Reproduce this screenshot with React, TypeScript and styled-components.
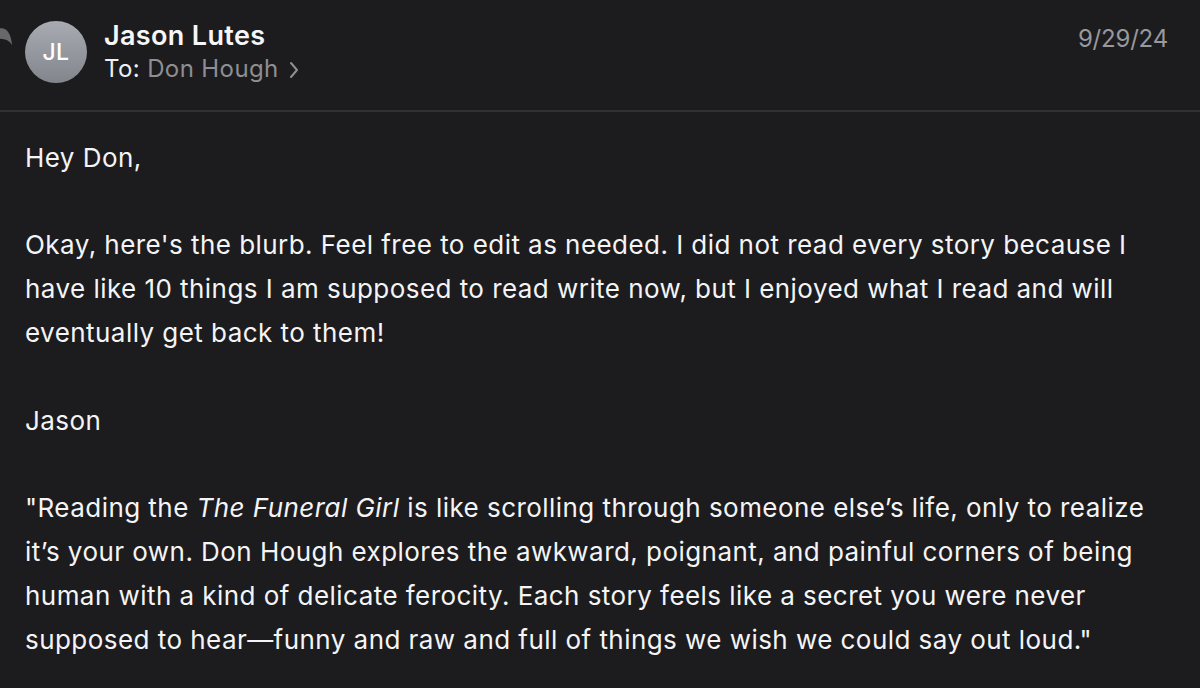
import React from "react";
import styled, { createGlobalStyle } from "styled-components";

const Global = createGlobalStyle`
  html, body { margin: 0; padding: 0; background: #1c1c1e; }
  body { font-family: Inter, "Noto Sans", "Liberation Sans", sans-serif; -webkit-font-smoothing: antialiased; }
`;

const Page = styled.div`
  width: 1200px;
  height: 688px;
  background: #1c1c1e;
  overflow: hidden;
  color: #f4f4f6;
`;

const Header = styled.header`
  height: 112px;
  box-sizing: border-box;
  display: flex;
  align-items: flex-start;
  padding: 20px 32px 0 0;
  border-bottom: 2px solid #313133;
`;

const ReplyMark = styled.svg`
  width: 12px;
  height: 22px;
  margin-top: 5px;
  flex: none;
`;

const Avatar = styled.div`
  width: 62px;
  height: 62px;
  border-radius: 50%;
  margin: 1px 0 0 13px;
  flex: none;
  background: linear-gradient(180deg, #a9abb2 0%, #83858d 100%);
  display: flex;
  align-items: center;
  justify-content: center;
  color: #ffffff;
  font-size: 23px;
  font-weight: 500;
  letter-spacing: 0.5px;
`;

const Meta = styled.div`
  margin-left: 17px;
  flex: 1;
  display: flex;
  flex-direction: column;
`;

const Name = styled.div`
  font-size: 27px;
  line-height: 32px;
  font-weight: 600;
  letter-spacing: 0.35px;
  color: #f6f6f8;
`;

const ToLine = styled.div`
  font-size: 24px;
  line-height: 32px;
  margin-top: 1px;
  letter-spacing: 0.4px;
  color: #f0f0f2;
  display: flex;
  align-items: center;
`;

const Recipient = styled.span`
  color: #8e8e93;
  margin-left: 7px;
`;

const Chevron = styled.svg`
  width: 10px;
  height: 18px;
  margin-left: 10px;
  margin-top: 1px;
`;

const DateText = styled.div`
  font-size: 24px;
  line-height: 32px;
  margin-top: 3px;
  letter-spacing: -0.2px;
  color: #98989d;
`;

const Body = styled.main`
  padding: 23.5px 0 0 25px;
  font-size: 26px;
  line-height: 44px;
  color: #f4f4f6;
  letter-spacing: 0.45px;
`;

const Paragraph = styled.p`
  margin: 0 0 43.5px 0;
`;

const Line = styled.span`
  display: block;
  white-space: nowrap;
`;

export default function App() {
  return (
    <Page>
      <Global />
      <Header>
        <ReplyMark viewBox="0 0 12 22">
          <path
            d="M-3 4 C5 1 11 6 12 20 C9 15 4 13 -3 14 Z"
            fill="#67676c"
          />
        </ReplyMark>
        <Avatar>JL</Avatar>
        <Meta>
          <Name>Jason Lutes</Name>
          <ToLine>
            To:<Recipient>Don Hough</Recipient>
            <Chevron viewBox="0 0 10 18">
              <path d="M2 2 L8 9 L2 16" fill="none" stroke="#8e8e93" strokeWidth="2" strokeLinecap="round" strokeLinejoin="round" />
            </Chevron>
          </ToLine>
        </Meta>
        <DateText>9/29/24</DateText>
      </Header>
      <Body>
        <Paragraph>
          <Line>Hey Don,</Line>
        </Paragraph>
        <Paragraph>
          <Line>Okay, here's the blurb. Feel free to edit as needed. I did not read every story because I</Line>
          <Line>have like 10 things I am supposed to read write now, but I enjoyed what I read and will</Line>
          <Line>eventually get back to them!</Line>
        </Paragraph>
        <Paragraph>
          <Line>Jason</Line>
        </Paragraph>
        <Paragraph>
          <Line>"Reading the <em>The Funeral Girl</em> is like scrolling through someone else’s life, only to realize</Line>
          <Line>it’s your own. Don Hough explores the awkward, poignant, and painful corners of being</Line>
          <Line>human with a kind of delicate ferocity. Each story feels like a secret you were never</Line>
          <Line>supposed to hear—funny and raw and full of things we wish we could say out loud."</Line>
        </Paragraph>
      </Body>
    </Page>
  );
}
